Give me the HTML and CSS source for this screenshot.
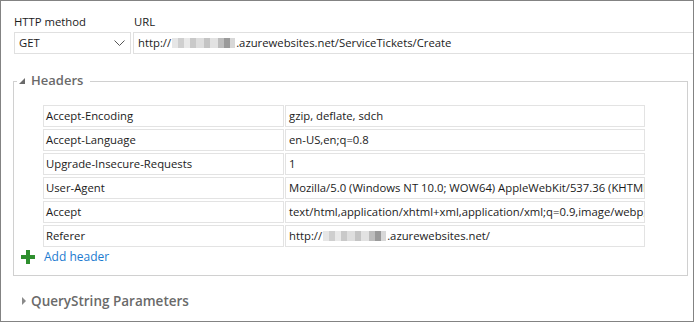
FILE: index.html
```html
<!DOCTYPE html>
<html>
<head>
<meta charset="utf-8">
<link rel="stylesheet" href="styles.css">
</head>
<body>
<div class="window">
  <div class="request">
    <div class="field method">
      <div class="label">HTTP method</div>
      <div class="box select">
        <span>GET</span>
        <svg class="chevron" width="11" height="6" viewBox="0 0 11 6"><polyline points="0.5,0.5 5.5,5.5 10.5,0.5" fill="none" stroke="#555" stroke-width="1"/></svg>
      </div>
    </div>
    <div class="field url">
      <div class="label">URL</div>
      <div class="box text">http://<span class="blur b1"></span>.azurewebsites.net/ServiceTickets/Create</div>
    </div>
  </div>

  <div class="group">
    <div class="group-head">
      <span class="corner"></span>
      <span class="legend"><span class="tri-down"></span>Headers</span>
      <span class="line"></span>
    </div>
    <div class="group-body">
      <div class="headers">
        <div class="cell">Accept-Encoding</div><div class="cell">gzip, deflate, sdch</div>
        <div class="cell">Accept-Language</div><div class="cell">en-US,en;q=0.8</div>
        <div class="cell">Upgrade-Insecure-Requests</div><div class="cell">1</div>
        <div class="cell">User-Agent</div><div class="cell">Mozilla/5.0 (Windows NT 10.0; WOW64) AppleWebKit/537.36 (KHTML, like Gecko) Chrome/51.0</div>
        <div class="cell">Accept</div><div class="cell">text/html,application/xhtml+xml,application/xml;q=0.9,image/webp,*/*;q=0.8</div>
        <div class="cell">Referer</div><div class="cell">http://<span class="blur b2"></span>.azurewebsites.net/</div>
      </div>
      <div class="add">
        <svg class="plus" width="14" height="14" viewBox="0 0 14 14"><rect x="5" y="0" width="4" height="14" fill="#2f8f2f"/><rect x="0" y="5" width="14" height="4" fill="#2f8f2f"/></svg>
        <span class="add-text">Add header</span>
      </div>
    </div>
  </div>

  <div class="section">
    <span class="tri-right"></span>QueryString Parameters
  </div>
</div>
</body>
</html>
```
FILE: styles.css
```css
html, body {
  margin: 0;
  padding: 0;
  background: #fff;
}
body {
  font-family: "Open Sans", "Liberation Sans", sans-serif;
  font-size: 11.3px;
  color: #1b1b1b;
}
.window {
  width: 694px;
  height: 322px;
  box-sizing: border-box;
  border: 1px solid #838383;
  padding: 13px 0 0 12px;
  overflow: hidden;
}
.request {
  display: flex;
  gap: 2px;
}
.label {
  line-height: 16px;
  height: 16px;
  margin-bottom: 2px;
  padding-left: 1px;
}
.box {
  box-sizing: border-box;
  height: 22px;
  border: 1px solid #e0e0e0;
  line-height: 20px;
  white-space: nowrap;
  overflow: hidden;
}
.method {
  width: 118px;
}
.select {
  display: flex;
  align-items: center;
  justify-content: space-between;
  padding: 0 5px 0 4px;
  margin-left: 1px;
  width: 117px;
}
.chevron {
  display: block;
}
.url {
  flex: 1;
}
.text {
  padding-left: 4px;
  border-right: none;
}
.blur {
  display: inline-block;
  height: 10px;
  vertical-align: -1px;
  background: linear-gradient(90deg,
    #e6e6e6 0 6px, #cfcfcf 6px 12px, #e9e9e9 12px 18px, #c9c9c9 18px 24px,
    #dedede 24px 32px, #c4c4c4 32px 38px, #e2e2e2 38px 46px, #bdbdbd 46px 52px,
    #9a9a9a 52px 58px, #d8d8d8 58px 64px);
}
.b1 { width: 63px; margin: 0 1px; }
.b2 { width: 63px; margin: 0 1px; }

.group {
  width: 675px;
  margin-top: 19px;
}
.group-head {
  display: flex;
  align-items: center;
  height: 16px;
}
.corner {
  align-self: flex-end;
  width: 4px;
  height: 8px;
  box-sizing: border-box;
  border-top: 1px solid #d0d0d0;
  border-left: 1px solid #d0d0d0;
}
.line {
  align-self: flex-end;
  flex: 1;
  height: 8px;
  box-sizing: border-box;
  border-top: 1px solid #d0d0d0;
  border-right: 1px solid #d0d0d0;
}
.legend {
  display: flex;
  align-items: center;
  padding: 0 7px 0 2px;
  font-weight: 600;
  font-size: 13px;
  color: #6a6a6a;
  line-height: 16px;
  margin-top: -2px;
}
.tri-down {
  width: 0;
  height: 0;
  border-left: 6px solid transparent;
  border-bottom: 6px solid #6a6a6a;
  margin-right: 6px;
  margin-top: 1px;
}
.group-body {
  border: 1px solid #d0d0d0;
  border-top: none;
  padding: 16px 0 10px 7px;
}
.headers {
  display: grid;
  grid-template-columns: 241px 360px;
  column-gap: 1px;
  row-gap: 2px;
  margin-left: 22px;
}
.cell {
  box-sizing: border-box;
  height: 22px;
  border: 1px solid #e3e3e3;
  padding: 0 2px;
  line-height: 20px;
  white-space: nowrap;
  overflow: hidden;
}
.headers .cell:nth-child(2n) {
  padding-left: 3px;
}
.add {
  display: flex;
  align-items: center;
  height: 16px;
  margin-top: 2px;
}
.plus {
  display: block;
  margin-right: 9px;
}
.add-text {
  color: #1c7bd0;
  line-height: 16px;
  font-size: 12px;
}
.section {
  display: flex;
  align-items: center;
  margin-top: 17px;
  padding-left: 9px;
  height: 16px;
  font-weight: 600;
  font-size: 13.5px;
  color: #6a6a6a;
}
.tri-right {
  width: 0;
  height: 0;
  border-top: 4px solid transparent;
  border-bottom: 4px solid transparent;
  border-left: 4px solid #8a8a8a;
  margin-right: 5px;
}
```
